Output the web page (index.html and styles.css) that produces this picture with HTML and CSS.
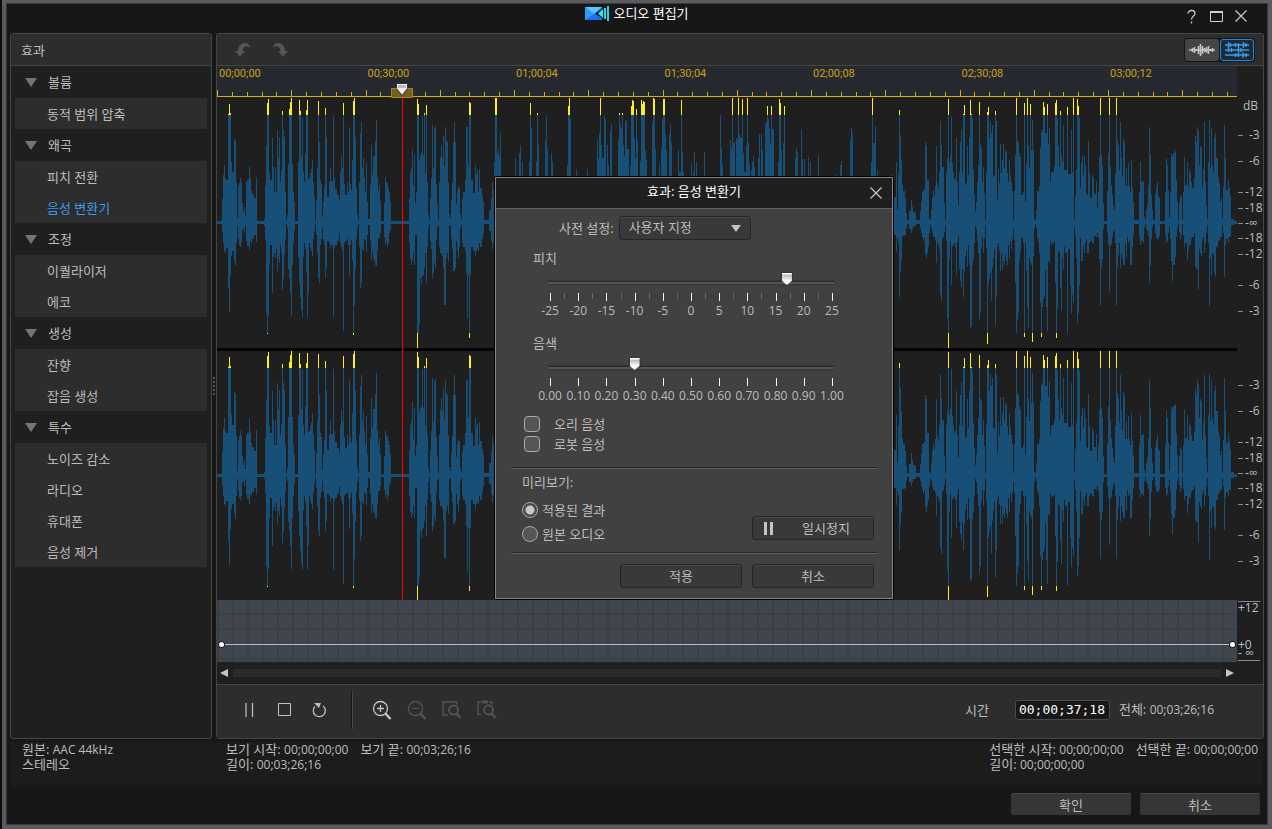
FILE: index.html
```html
<!DOCTYPE html>
<html lang="ko">
<head>
    <meta charset="UTF-8">
    <meta name="viewport" content="width=device-width, initial-scale=1.0">
    <title>오디오 편집기</title>
    <link rel="stylesheet" href="styles.css">
</head>
<body>

<div class="window">
    <header class="titleBar">
        <h1 class="appTitle">
            <svg width="24" height="15" viewBox="0 0 24 15">
                <rect x="0" y="1" width="17" height="13" fill="#1d6ff0"/>
                <path d="M0 1h17L9 8z" fill="#59c4ff"/>
                <path d="M0 1l9 7-9 6z" fill="#2f9bf5"/>
                <path d="M17 3v9l-7-4.500z" fill="#071420"/>
                <path d="M18 3v9l-5-4.500z" fill="#1ff0e0"/>
                <path d="M19 2h2v11h-2zM22 0h2v15h-2z" fill="#23d5e8"/>
            </svg>
            <span>오디오 편집기</span>
        </h1>
        <div class="windowButtons">
            <button type="button" aria-label="도움말">
                <svg width="13" height="15" viewBox="0 0 13 15"><path d="M3 4.500C3 .5 10 .5 10 4.500c0 2.500-3.500 2.500-3.500 6M6.500 12.500v2" fill="none" stroke="#c8c8c8" stroke-width="1.300"/></svg>
            </button>
            <button type="button" aria-label="최대화">
                <svg width="13" height="11" viewBox="0 0 13 11"><path d="M.5 1h12v9.500H.5z" fill="none" stroke="#d0d0d0"/><path d="M0 0h13v2H0z" fill="#d0d0d0"/></svg>
            </button>
            <button type="button" aria-label="닫기">
                <svg width="12" height="12" viewBox="0 0 12 12"><path d="M.5.5l11 11M11.500.5l-11 11" stroke="#c8c8c8" stroke-width="1.200"/></svg>
            </button>
        </div>
    </header>

    <div class="workspace">
        <aside class="effects">
            <h2>효과</h2>
            <div class="group">
                <h3>볼륨</h3>
                <ul>
                    <li><button type="button">동적 범위 압축</button></li>
                </ul>
            </div>
            <div class="group">
                <h3>왜곡</h3>
                <ul>
                    <li><button type="button">피치 전환</button></li>
                    <li><button type="button" class="active">음성 변환기</button></li>
                </ul>
            </div>
            <div class="group">
                <h3>조정</h3>
                <ul>
                    <li><button type="button">이퀄라이저</button></li>
                    <li><button type="button">에코</button></li>
                </ul>
            </div>
            <div class="group">
                <h3>생성</h3>
                <ul>
                    <li><button type="button">잔향</button></li>
                    <li><button type="button">잡음 생성</button></li>
                </ul>
            </div>
            <div class="group">
                <h3>특수</h3>
                <ul>
                    <li><button type="button">노이즈 감소</button></li>
                    <li><button type="button">라디오</button></li>
                    <li><button type="button">휴대폰</button></li>
                    <li><button type="button">음성 제거</button></li>
                </ul>
            </div>
        </aside>

        <div class="splitter"><i></i><i></i><i></i><i></i><i></i></div>

        <main class="editor">
            <div class="toolbar">
                <div class="history">
                    <button type="button" aria-label="실행 취소">
                        <svg width="16" height="14" viewBox="0 0 16 14"><path d="M0 8h3C3 3 6 0 10 0c3 0 5 2 5.500 5C14 3.500 12 3 10.500 3.500 8.500 4 7.500 6 7.500 8H10l-5 5.500z" fill="#565656"/></svg>
                    </button>
                    <button type="button" aria-label="다시 실행">
                        <svg width="16" height="14" viewBox="0 0 16 14"><path d="M16 8h-3c0-5-3-8-7-8C3 0 1 2 .5 5 2 3.500 4 3 5.500 3.500 7.500 4 8.500 6 8.500 8H6l5 5.500z" fill="#565656"/></svg>
                    </button>
                </div>
                <div class="viewToggle">
                    <button type="button" aria-label="단일 보기">
                        <svg width="26" height="14" viewBox="0 0 26 14"><path d="M0 7h26M3.500 5v4M5.500 4v6M7.500 6v2M9.500 3v8M11.500 1v12M13.500 3v8M15.500 5v4M17.500 4v6M19.500 3v8M21.500 6v2M23.500 5v4" stroke="#c4c4c4" stroke-width="1.600"/></svg>
                    </button>
                    <button type="button" class="active" aria-label="채널별 보기">
                        <svg width="26" height="16" viewBox="0 0 26 16"><path d="M1 3h24M1 8h24M1 13h24M4.500 0v6M6.500 1v4M11.500 1v4M14.500 1v4M19.500 0v6M22 1v4M4.500 6v4M7.500 6v4M14.500 5v6M17 6v4M11.500 11v4M14.500 11v4M19 10v6M22 11v4" fill="none" stroke="#3c9be8" stroke-width="1.400"/></svg>
                    </button>
                </div>
            </div>

            <div class="timeline">
                <div class="tracks">
                    <div class="ruler">
                        <svg id="rulerTicks" viewBox="0 0 1020 31" preserveAspectRatio="none"></svg>
                        <div class="rulerLabels">
                            <span>00;00;00</span><span>00;30;00</span><span>01;00;04</span><span>01;30;04</span><span>02;00;08</span><span>02;30;08</span><span>03;00;12</span>
                        </div>
                    </div>
                    <svg class="wave waveLeft" viewBox="0 0 1020 251" preserveAspectRatio="none"></svg>
                    <svg class="wave waveRight" viewBox="0 1 1020 249" preserveAspectRatio="none"></svg>
                    <div class="playhead">
                        <svg width="22" height="15" viewBox="0 0 22 15">
                            <path d="M.5 5.500h21v9H.5z" fill="#75601c" stroke="#a8851a"/>
                            <path d="M5.500.5h11v5L11 12.500 5.500 5.500z" fill="#ededed" stroke="#333"/>
                            <path d="M7 2h8v3H7z" fill="#bcbcbc"/>
                        </svg>
                    </div>
                    <div class="envelope"><span></span></div>
                    <div class="scroll">
                        <svg width="8" height="8" viewBox="0 0 8 8"><path d="M8 0v8L0 4z" fill="#c4c4c4"/></svg>
                        <div class="scrollTrack"></div>
                        <svg width="8" height="8" viewBox="0 0 8 8"><path d="M0 0v8l8-4z" fill="#c4c4c4"/></svg>
                    </div>
                </div>
                <svg id="dbScale" width="26" height="596" viewBox="0 0 26 596"></svg>
            </div>

            <div class="controls">
                <button type="button" aria-label="일시정지"><svg width="9" height="14" viewBox="0 0 9 14"><path d="M1 0v14M7.500 0v14" stroke="#c4c4c4" stroke-width="1.200"/></svg></button>
                <button type="button" aria-label="정지"><svg width="13" height="13" viewBox="0 0 13 13"><path d="M.5.5h12v12H.5z" fill="none" stroke="#c4c4c4"/></svg></button>
                <button type="button" aria-label="반복"><svg width="15" height="16" viewBox="0 0 15 16"><path d="M3 4.500a6 6 0 1 0 8-.5" fill="none" stroke="#bdbdbd" stroke-width="1.300"/><path d="M2 1h7L7 6z" fill="#bdbdbd"/></svg></button>
                <i class="divider"></i>
                <button type="button" aria-label="확대"><svg width="20" height="20" viewBox="0 0 20 20"><g fill="none" stroke="#c4c4c4"><circle cx="8.500" cy="8.500" r="7" stroke-width="1.300"/><path d="M5 8.500h7M8.500 5v7" stroke-width="1.300"/><path d="M13.500 13.500l5 5.500" stroke-width="2.400"/></g></svg></button>
                <button type="button" aria-label="축소"><svg width="20" height="20" viewBox="0 0 20 20"><g fill="none" stroke="#555"><circle cx="8.500" cy="8.500" r="7" stroke-width="1.300"/><path d="M5 8.500h7" stroke-width="1.300"/><path d="M13.500 13.500l5 5.500" stroke-width="2.400"/></g></svg></button>
                <button type="button" aria-label="맞춤"><svg width="20" height="20" viewBox="0 0 20 20"><g fill="none" stroke="#555"><path d="M6 15H1V2h14v3" stroke-width="1.300"/><circle cx="11.500" cy="10" r="4.500" stroke-width="1.800"/><path d="M14.500 13.500l4 4.500" stroke-width="2.400"/></g></svg></button>
                <button type="button" aria-label="선택 확대"><svg width="20" height="20" viewBox="0 0 20 20"><g fill="none" stroke="#555"><path d="M4 14.500H1V2h3M12 2h3v3" stroke-width="1.300"/><path d="M5 2h6" stroke-width="3"/><circle cx="11.500" cy="10" r="4.500" stroke-width="1.800"/><path d="M14.500 13.500l4 4.500" stroke-width="2.400"/></g></svg></button>
                <div class="time">
                    <label for="timeCode">시간</label>
                    <input type="text" id="timeCode" value="00;00;37;18">
                    <span>전체: <b>00;03;26;16</b></span>
                </div>
            </div>
        </main>
    </div>

    <div class="info">
        <p>원본: <b>AAC 44kHz</b><br>스테레오</p>
        <p><span>보기 시작: <b>00;00;00;00</b></span><span>보기 끝: <b>00;03;26;16</b></span><br>길이: <b>00;03;26;16</b></p>
        <p><span>선택한 시작: <b>00;00;00;00</b></span><span>선택한 끝: <b>00;00;00;00</b></span><br>길이: <b>00;00;00;00</b></p>
    </div>

    <footer>
        <button type="button">확인</button>
        <button type="button">취소</button>
    </footer>
</div>

<form class="dialog" role="dialog" aria-labelledby="dialogTitle">
    <div class="dialogHeader">
        <h2 id="dialogTitle">효과: 음성 변환기</h2>
        <button type="button" aria-label="닫기">
            <svg width="12" height="12" viewBox="0 0 12 12"><path d="M.5.5l11 11M11.500.5l-11 11" stroke="#c8c8c8" stroke-width="1.200"/></svg>
        </button>
    </div>
    <div class="dialogBody">
        <div class="preset">
            <label for="preset">사전 설정:</label>
            <div class="selectBox">
                <select id="preset"><option>사용자 지정</option></select>
            </div>
        </div>

        <div class="slider">
            <label for="pitch">피치</label>
            <input type="range" id="pitch" min="-25" max="25" value="17">
            <div class="scale half">
                <span>-25</span><span>-20</span><span>-15</span><span>-10</span><span>-5</span><span>0</span><span>5</span><span>10</span><span>15</span><span>20</span><span>25</span>
            </div>
        </div>

        <div class="slider">
            <label for="timbre">음색</label>
            <input type="range" id="timbre" min="0" max="1" step="0.01" value="0.3">
            <div class="scale">
                <span>0.00</span><span>0.10</span><span>0.20</span><span>0.30</span><span>0.40</span><span>0.50</span><span>0.60</span><span>0.70</span><span>0.80</span><span>0.90</span><span>1.00</span>
            </div>
        </div>

        <div class="checks">
            <label><input type="checkbox">오리 음성</label>
            <label><input type="checkbox">로봇 음성</label>
        </div>

        <hr>
        <p class="previewTitle">미리보기:</p>
        <div class="preview">
            <div class="radios">
                <label><input type="radio" name="preview" checked>적용된 결과</label>
                <label><input type="radio" name="preview">원본 오디오</label>
            </div>
            <button type="button" class="pause">
                <svg width="9" height="13" viewBox="0 0 9 13"><path d="M0 0h3v13H0zM6 0h3v13H6z" fill="#c4c4c4"/></svg>
                <span>일시정지</span>
            </button>
        </div>
        <hr>
        <div class="dialogButtons">
            <button type="button">적용</button>
            <button type="button">취소</button>
        </div>
    </div>
</form>

<script src="wave.js"></script>
</body>
</html>
```
FILE: styles.css
```css
* {
    box-sizing: border-box;
}
body {
    margin: 0;
    min-height: 100vh;
    background-color: #0c0c0e;
    color: #bdbdbd;
    font-family: "Open Sans", "Noto Sans CJK KR", sans-serif;
    font-size: 13px;
    line-height: 16px;
    position: relative;
}
h1, h2, h3, p, ul {
    margin: 0;
    padding: 0;
    font-size: 13px;
    font-weight: normal;
    list-style: none;
}
button, input, select {
    font: inherit;
    color: inherit;
    margin: 0;
    padding: 0;
    border: none;
    background: none;
}
b {
    font-weight: normal;
    font-size: 12px;
}
svg {
    display: block;
}

/* window */
.window {
    margin-left: 2px;
    min-height: 100vh;
    padding: 0 4px;
    border: 4px solid #5a5a5f;
    border-top-width: 3px;
    background-color: #171717;
    box-shadow: inset 0 0 0 1px #3a3a3a;
}
.titleBar {
    height: 30px;
    display: grid;
    grid-template-columns: 1fr auto 1fr;
}
.appTitle {
    grid-column: 2;
    display: flex;
    gap: 4px;
    height: 20px;
    align-items: center;
    color: #fff;
}
.windowButtons {
    display: flex;
    justify-content: flex-end;
    align-items: center;
    height: 26px;
    gap: 12px;
    padding-right: 17px;
}

.workspace {
    display: grid;
    grid-template-columns: 202px 4px minmax(0, 1fr);
}

/* effects list */
.effects {
    border: 1px solid #454541;
    border-radius: 3px;
    background-color: #1f1f1f;
}
.effects h2 {
    height: 32px;
    line-height: 32px;
    padding-left: 10px;
    background-color: #2d2d2d;
    border-bottom: 1px solid #454541;
}
.group {
    padding: 0 4px;
}
.group h3 {
    height: 32px;
    display: flex;
    align-items: center;
    gap: 11px;
    padding-left: 10px;
}
.group h3::before {
    content: "";
    border: 6px solid transparent;
    border-top: 9px solid #757575;
    border-bottom: none;
}
.group ul {
    background-color: #2d2d2d;
}
.group button {
    display: block;
    width: 100%;
    height: 31px;
    padding-left: 32px;
    text-align: left;
}
.group button.active {
    color: #3c9be8;
}
.splitter {
    display: flex;
    flex-direction: column;
    justify-content: center;
    align-items: center;
    gap: 2px;
}
.splitter i {
    width: 2px;
    height: 2px;
    background-color: #555;
}

/* editor */
.editor {
    border: 1px solid #454541;
    border-radius: 3px;
    background-color: #1f1f1f;
}
.toolbar {
    height: 32px;
    display: flex;
    justify-content: space-between;
    align-items: center;
    padding: 0 8px 0 18px;
    background-color: #2d2d2d;
    border-bottom: 1px solid #454541;
}
.history {
    display: flex;
    gap: 21px;
}
.viewToggle {
    display: flex;
    gap: 1px;
    padding: 1px;
    border-radius: 4px;
    background-color: #161616;
}
.viewToggle button {
    width: 34px;
    height: 22px;
    display: grid;
    place-items: center;
    border-radius: 3px;
    background-color: #454545;
}
.viewToggle button.active {
    border: 1px solid #2585dd;
    background-color: #1c2a38;
}
.timeline {
    display: grid;
    grid-template-columns: minmax(0, 1fr) 26px;
}
.tracks {
    position: relative;
    min-width: 0;
}
.ruler {
    height: 31px;
    position: relative;
    background-color: #262930;
    border-bottom: 1px solid #d9ad0c;
}
#rulerTicks {
    position: absolute;
    width: 100%;
    height: 100%;
}
.rulerLabels {
    display: flex;
    color: #cba30f;
    font-family: Roboto, sans-serif;
    font-size: 11px;
    overflow: hidden;
}
.rulerLabels span {
    flex: 0 0 14.56%;
    padding-left: 2px;
}
.wave {
    width: 100%;
}
.waveLeft {
    height: 251px;
    margin-bottom: 3px;
    box-shadow: 0 3px #000;
}
.waveRight {
    height: 249px;
}
.playhead {
    position: absolute;
    top: 17px;
    bottom: 84px;
    left: 18.18%;
    width: 1px;
    background: linear-gradient(transparent 14px, #f00 14px);
}
.playhead svg {
    margin-left: -11px;
}
.envelope {
    height: 62px;
    display: flex;
    align-items: flex-end;
    padding: 0 2px 15px;
    background-color: #41454e;
    background-image: linear-gradient(90deg, #3b3f47 2px, transparent 2px), linear-gradient(transparent 13px, #3b3f47 13px);
    background-size: 15px 15px;
}
.envelope span {
    flex: 1;
    height: 5px;
    display: flex;
    justify-content: space-between;
    background: linear-gradient(#a5cbe0, #a5cbe0) center / 100% 1px no-repeat;
}
.envelope span::before, .envelope span::after {
    content: "";
    width: 5px;
    height: 5px;
    border-radius: 50%;
    background-color: #fff;
    box-shadow: 0 0 0 1px #222;
}
.scroll {
    height: 22px;
    display: flex;
    align-items: center;
    gap: 5px;
    padding: 0 3px;
}
.scrollTrack {
    flex: 1;
    height: 8px;
    background-color: #2b2b2b;
}
#dbScale text {
    font-size: 12px;
    fill: #bdbdbd;
}
.controls {
    height: 54px;
    display: flex;
    align-items: center;
    padding: 0 49px 4px 15px;
    background-color: #2d2d2d;
    border-top: 1px solid #454541;
}
.controls button {
    width: 35px;
    height: 30px;
    display: grid;
    place-items: center;
}
.divider {
    width: 2px;
    height: 38px;
    margin: 0 11px 0 14px;
    background-color: #151515;
    border-right: 1px solid #4a4a44;
}
.time {
    margin-left: auto;
    display: flex;
    align-items: center;
}
.time input {
    width: 95px;
    height: 20px;
    margin: 0 9px 0 26px;
    padding: 0 3px;
    border: 1px solid #4a4a4a;
    border-radius: 3px;
    background-color: #171717;
    color: #fff;
    font-family: "DejaVu Sans Mono", monospace;
}

.info {
    display: grid;
    grid-template-columns: 204px 1fr auto;
    height: 45px;
    margin: 3px 1px 0;
    padding: 0 5px 0 11px;
    background-color: #1c1c1c;
    line-height: 15px;
}
.info span + span {
    margin-left: 12px;
}
footer {
    height: 38px;
    display: flex;
    justify-content: flex-end;
    align-items: flex-start;
    gap: 9px;
    padding: 6px 4px 0;
}
footer button {
    width: 120px;
    height: 22px;
    border-radius: 2px;
    border-top: 1px solid #464646;
    background-color: #363636;
}

/* voice changer dialog */
.dialog {
    position: absolute;
    left: 495px;
    top: 177px;
    width: 398px;
    border: 1px solid #858585;
    box-shadow: 0 0 0 1px #000;
    background-color: #414141;
}
.dialogHeader {
    height: 31px;
    display: grid;
    grid-template-columns: 1fr auto 1fr;
    align-items: center;
    background-color: #1f1f1f;
    border-bottom: 1px solid #606060;
}
.dialogHeader h2 {
    grid-column: 2;
    padding-bottom: 5px;
    color: #fff;
}
.dialogHeader button {
    justify-self: end;
    margin-right: 10px;
}
.dialogBody {
    padding: 7px 15px 10px;
}
.preset {
    display: flex;
    align-items: center;
    gap: 5px;
    margin: 0 0 9px 48px;
}
.selectBox {
    position: relative;
}
.selectBox::after {
    content: "";
    position: absolute;
    right: 10px;
    top: 9px;
    border: 5px solid transparent;
    border-top: 7px solid #c4c4c4;
    border-bottom: none;
    pointer-events: none;
}
.selectBox select {
    display: block;
    appearance: none;
    width: 132px;
    height: 24px;
    padding: 0 0 2px 9px;
}
.selectBox select, .dialogBody button {
    border: 1px solid #252525;
    border-radius: 3px;
    background-color: #393939;
    box-shadow: inset 0 1px #484848;
}
.slider {
    margin-bottom: 15px;
}
.slider label {
    display: block;
    height: 18px;
    line-height: 18px;
    padding-left: 22px;
}
.slider input {
    display: block;
    appearance: none;
    width: 292px;
    height: 12px;
    margin: 6px 0 8px 34px;
    background: linear-gradient(#2a2a2a 1px, #555 1px) center 8px / 286px 3px no-repeat;
    filter: drop-shadow(0 0 1px #222);
}
.slider input::-webkit-slider-thumb {
    appearance: none;
    width: 10px;
    height: 12px;
    background: linear-gradient(#fff 1px, #bbb 2px, #fff 8px);
    clip-path: polygon(0 0, 100% 0, 100% 65%, 50% 100%, 0 65%);
}
.scale {
    display: grid;
    grid-template-columns: repeat(11, 1fr);
    width: 310px;
    margin-left: 25px;
    font-size: 12px;
    text-align: center;
    white-space: nowrap;
}
.scale span {
    position: relative;
    padding-top: 10px;
}
.scale span::before {
    content: "";
    position: absolute;
    left: 50%;
    top: 0;
    width: 1px;
    height: 8px;
    background-color: #f4f4f4;
}
.half span:not(:last-child)::after {
    content: "";
    position: absolute;
    left: 100%;
    top: 0;
    width: 1px;
    height: 6px;
    background-color: #6a6a6a;
}
.checks, .radios {
    display: flex;
    flex-direction: column;
    gap: 4px;
}
.checks {
    margin: -3px 0 15px 13px;
}
.checks label, .radios label {
    display: flex;
    align-items: center;
    height: 16px;
}
.checks input, .radios input {
    appearance: none;
    width: 16px;
    height: 16px;
    border: 1px solid #aaa;
    background-color: #565656;
}
.checks input {
    margin-right: 14px;
    border-radius: 4px;
}
.radios input {
    margin-right: 4px;
    border-radius: 50%;
}
.radios input:checked {
    background: radial-gradient(circle, #c8c8c8 4px, #4a4a4a 5px);
}
hr {
    height: 2px;
    margin: 0;
    border: none;
    border-top: 1px solid #252525;
    background-color: #606060;
}
.previewTitle {
    padding: 5px 11px 12px;
}
.preview {
    display: flex;
    justify-content: space-between;
    align-items: flex-end;
    padding: 0 3px 10px 11px;
}
.radios {
    gap: 8px;
}
.dialogBody button {
    width: 122px;
    height: 24px;
}
.pause {
    display: flex;
    align-items: center;
    margin-bottom: 2px;
    padding-left: 11px;
}
.pause span {
    margin-left: 29px;
}
.dialogButtons {
    display: flex;
    justify-content: flex-end;
    gap: 10px;
    padding: 10px 3px 0;
}
```
FILE: wave.js
```js
// peaks: "x,up,down" - each value holds until the next x, down defaults to up / 2
const peaks = `0,1,1 5,23,9 6,47,20 7,57,28 8,44,30 9,42,25 11,108,65 12,118,89 13,109,53 14,60,33 15,50,28 17,83,38 18,81,43 19,40,20 20,4,3
21,35,15 22,39,22 23,44,24 24,39,20 25,19,7 26,10,5 27,15,10 28,6,3 29,40,18 30,42,23 32,56,28 33,44,18 34,32,20 35,28,16 37,24,12 39,45,19 40,1,1
47,3,3 48,37,17 49,76,90 50,119,111 51,123,93 52,49,42 53,42,22 55,84,70 56,55,34 57,30,30 58,55,35 59,30,26 60,92,48 61,65,35 62,85,40 63,40,22 64,51,30 65,111,67 66,92,56 67,85,32 68,30,16 69,2,1
70,7,5 71,58,46 72,113,55 73,120,70 74,124,93 75,58,42 76,30,20 77,20,8 78,1,1 81,60,35 82,122,60 83,111,75 84,66,87 85,105,94 86,50,34 87,40,20 88,69,26 89,112,50 90,122,94 91,43,70 92,44,20 93,49,25 94,53,28 95,62,33 96,40,16 97,25,8 98,1,1
99,22,12 100,54,30 101,121,55 102,80,60 103,42,22 104,38,16 105,5,5 106,20,16 107,35,22 108,114,55 109,85,45 110,25,18 112,40,20 113,54,26 114,41,22 116,106,94 117,44,25 118,33,22 120,27,18 122,22,10 123,50,20 124,65,24 125,54,28 126,119,108 127,38,20 128,27,18 130,40,16 131,30,22 132,95,53 133,38,22 134,32,17 135,62,37 136,121,112 137,124,83 138,85,46 139,34,16 140,8,6 141,2,1
142,40,24 143,89,65 144,100,60 145,54,26 146,64,28 147,44,16 148,30,18 149,59,29 150,20,12 151,3,2 153,37,18 154,77,37 155,47,28 156,66,35 157,66,38 158,81,42 159,102,43 160,45,28 161,31,15 162,37,15 163,21,10 164,1,1
167,19,14 168,45,21 169,40,18 170,39,24 171,34,20 172,30,10 173,20,7 174,1,1 192,24,20 193,50,36 194,54,42 195,73,38 196,36,30 197,67,42 198,19,12 199,30,12 200,123,125 201,118,110 202,62,101 203,67,55 204,69,62 205,106,53 206,67,52 207,109,45 208,49,30 209,117,60 210,40,24 211,7,6 212,2,1
213,24,18 214,44,26 215,97,55 216,54,50 217,94,40 218,96,45 219,38,17 220,18,4 221,2,2 222,40,24 223,65,30 224,77,30 225,64,33 226,86,45 227,56,82 228,95,82 229,82,35 230,80,30 231,40,38 232,8,3 233,4,2 234,22,16 235,39,26 236,80,48 237,100,48 238,80,45 239,18,18 240,31,28 241,36,35 242,34,24 243,8,5 244,3,2
245,23,20 246,30,24 248,42,28 249,95,50 250,95,95 251,57,52 252,120,115 253,119,52 254,42,24 256,29,28 258,57,33 259,48,28 260,52,26 261,30,28 262,53,20 263,34,24 265,26,16 266,20,10 267,2,1 272,12,8 274,24,18 275,40,26 276,32,20
277,60 278,124 280,69 281,73 282,66 283,89 284,30 298,64 299,30 302,69 303,77 304,40 305,60 306,20 312,60 313,119 314,94 315,20 319,60 320,109 321,77 322,20 328,82 329,106 330,73 331,30 334,69 335,61 336,20 350,57 351,116 352,124 353,103 354,20 359,53 360,20 370,53 371,10
380,81 381,64 382,89 383,124 384,77 385,64 387,107 388,103 389,30 390,77 391,57 392,30 393,91 394,98 395,30 401,82 402,109 403,97 404,94 405,109 406,77 407,66 408,101 409,102 410,73 412,40 413,57 414,116 415,122 416,121 417,84 418,64 419,113 420,82 421,30 423,61 424,122 425,118 426,121 427,120 428,72 429,62 430,30
435,99 436,124 437,123 438,73 439,30 442,57 443,30 444,73 445,103 446,123 448,88 449,72 450,30 452,88 453,98 454,79 455,30 461,73 462,50 464,122 465,70 466,50 467,20 474,59 475,30 476,50 477,70 478,30 479,60 480,30 487,70 488,20 503,107 504,74 505,57 506,20
513,82 514,73 515,124 516,79 517,80 518,45 519,84 520,82 521,124 522,88 523,85 524,84 525,123 526,69 527,50 529,76 530,124 531,80 532,58 533,30 534,52 535,60 536,66 537,55 538,20 541,64 542,88 543,30 544,88 545,72 546,30 548,98 549,100 550,116 551,103 552,94 553,79 554,116 555,93 557,30
561,60 562,123 563,119 564,72 565,45 566,79 567,116 568,30 578,64 579,74 580,70 581,30 584,93 585,63 586,30 587,63 588,30 591,65 592,30 593,60 594,20 601,67 602,20 618,48 619,20 623,57 624,61 625,45 626,20 633,82 634,94 635,89 636,30 654,60 655,124 656,79 658,96 659,30 660,52 661,30 675,48 676,20
677,25,12 679,60,29 680,12,15 681,49,20 682,112,74 683,87,49 684,63,37 685,37,13 686,31,13 688,24,12 689,9,5 690,2,1 692,11,6 694,22,10 695,15,6 696,10,3 698,9,3 699,2,1 703,11,5 704,21,10 705,31,14 706,31,18 707,33,15 708,80,31 709,76,36 710,42,30 711,42,24 712,3,10 713,2,2
714,12,5 715,24,10 716,32,14 717,26,14 718,36,17 719,76,40 720,39,20 721,34,22 722,50,26 723,101,72 724,77,78 725,55,16 726,55,14 727,19,9 728,2,2 729,50,18 730,64,95 731,123,125 732,60,36 733,66,18 734,106,62 735,59,24 736,50,22 737,42,20 738,44,24 739,84,52 740,40,19 741,17,13
742,50,46 743,80,58 744,93,64 745,49,46 746,108,74 747,117,48 748,37,34 749,39,28 750,76,44 751,47,22 752,84,42 753,122,105 754,108,103 755,104,43 756,52,36 757,27,20 758,10,3 759,20,6 760,40,18 761,57,30 762,120,97 763,77,90 764,74,25 765,40,14 766,55,30 767,29,15 768,2,2
769,50,25 770,110,121 771,115,62 772,84,55 773,101,50 774,89,78 775,97,45 776,47,35 777,46,26 778,111,102 779,101,74 780,22,24 781,53,20 782,39,28 783,78,48 784,49,30 785,62,47 786,78,38 787,54,42 788,72,32 789,70,38 790,49,42 791,40,22 792,62,36 793,47,18 794,40,26 795,31,16 796,2,6
797,31,17 798,67,60 799,124,110 800,82,97 801,80,90 802,69,38 803,65,28 804,27,15 806,30,20 807,119,114 808,20,20 809,58,48 810,124,85 811,77,105 812,54,35 813,118,39 814,72,42 815,102,119 816,72,33 817,3,6 818,2,1 819,12,5 820,31,15 821,31,18 822,36,30 823,74,80 824,90,114 825,92,84 826,120,76 827,115,73 828,89,47 829,89,84 830,118,108 831,78,38 832,94,40
833,40,18 834,49,22 835,50,20 837,55,18 838,119,60 839,122,115 840,104,86 841,76,28 842,55,30 843,111,65 844,67,88 845,60,34 846,97,46 847,52,24 848,52,30 850,115,110 851,48,26 853,48,62 854,92,91 855,50,72 856,124,80 857,3,4 858,26,14 859,52,35 860,123,100 861,116,90 862,104,62 863,34,15 864,59,38 865,67,38 866,47,23 867,66,30 868,57,20 869,29,16 870,27,30 871,81,30 872,49,20 873,24,18
875,47,20 876,44,21 877,28,13 879,41,14 880,14,10 881,30,15 882,65,36 883,124,83 884,67,44 885,57,36 886,19,6 887,1,1 890,31,10 891,69,22 892,124,69 893,55,23 894,37,21 895,27,14 896,17,9 897,12,7 898,49,20 899,124,83 900,82,44 901,77,32 902,52,20 903,100,45 904,64,30 905,45,36 906,83,42 907,80,42 908,36,20 909,54,34 910,36,14 911,59,20 912,36,18 913,30,42 914,62,42 915,34,24 916,20,12 917,2,1
922,30,14 923,60,22 924,40,18 926,41,20 927,5,5 928,2,1 929,12,6 930,17,8 931,37,13 932,95,60 933,67,43 934,27,16 935,12,4 936,2,1 938,28,10 939,35,15 940,40,16 941,26,16 942,24,13 943,1,1 948,30,12 949,64,20 950,57,18 951,32,10 952,4,4 953,30,15 954,68,38 955,66,58 956,69,42 958,71,34 959,42,14 960,20,5 961,1,1 962,19,9 963,27,16 964,25,12 965,2,1
966,30,13 967,65,24 968,37,20 970,60,37 971,35,28 972,52,22 973,49,22 974,40,16 975,34,14 977,44,10 978,86,44 979,80,46 980,95,46 981,91,67 982,57,26 983,76,30 984,74,33 985,35,18 986,52,14 987,100,30 988,40,20 989,17,10 990,3,2 991,60,20 992,102,84 993,54,35 994,94,52 995,57,30 996,50,32 997,84,50 998,89,53 999,64,24 1001,44,18 1002,39,17 1003,20,14 1004,24,14 1005,3,2
1006,35,10 1007,97,54 1008,64,22 1009,32,16 1011,42,20 1012,34,14 1013,26,14 1014,3,2 1017,1,1`;

const LENGTH = 1020;
const CENTER = 125;
const CLIP_UP = 107;
const CLIP_DOWN = 110;

function drawWaves() {
    const points = peaks.split(/\s+/).map(p => p.split(',').map(Number));
    let body = '';
    let clipped = '';

    points.forEach(([x, up, down = Math.round(up / 2)], i) => {
        const end = i + 1 < points.length ? points[i + 1][0] : LENGTH;
        const w = end - x;
        const top = CENTER - Math.min(up, CLIP_UP);
        const bottom = CENTER + 1 + Math.min(down, CLIP_DOWN);
        body += `M${x} ${top}h${w}V${bottom}h${-w}z`;
        if (up > CLIP_UP) {
            clipped += `M${x} ${CENTER - up}h${w}V${top}h${-w}z`;
        }
        if (down > CLIP_DOWN) {
            clipped += `M${x} ${bottom}h${w}V${CENTER + 1 + down}h${-w}z`;
        }
    });

    document.querySelectorAll('.wave').forEach(svg => {
        svg.innerHTML = `<g shape-rendering="crispEdges"><path d="${body}" fill="#174f77"/><path d="${clipped}" fill="#ffee1f"/></g>`;
    });
}

function drawRuler() {
    let d = '';
    for (let i = 0; i < 69; i++) {
        const x = Math.round(i * 14.85);
        const h = i % 5 === 0 ? 6 : 4;
        d += `M${x} ${31 - h}h1v${h}h-1z`;
    }
    document.getElementById('rulerTicks').innerHTML = `<path d="${d}" fill="#d9ad0c" shape-rendering="crispEdges"/>`;
}

function drawScale() {
    const levels = [['-3', 69], ['-6', 95], ['-12', 126], ['-18', 142], ['-∞', 157], ['-18', 172], ['-12', 188], ['-6', 219], ['-3', 245]];
    let html = '<text x="6" y="44">dB</text>';
    [0, 250].forEach(offset => {
        levels.forEach(([label, y]) => {
            const x = label.length > 2 || label === '-∞' ? 8 : 12;
            html += `<path d="M1 ${y + offset}.5h5" stroke="#8a8a8a"/><text x="${x}" y="${y + offset + 4}">${label}</text>`;
        });
    });
    html += '<path d="M1 535.5h22M1 594.5h22" stroke="#8a8a8a"/>';
    html += '<text x="1" y="546">+12</text><text x="1" y="583">+0</text><text x="1" y="591">- ∞</text>';
    document.getElementById('dbScale').innerHTML = html;
}

drawWaves();
drawRuler();
drawScale();
```
